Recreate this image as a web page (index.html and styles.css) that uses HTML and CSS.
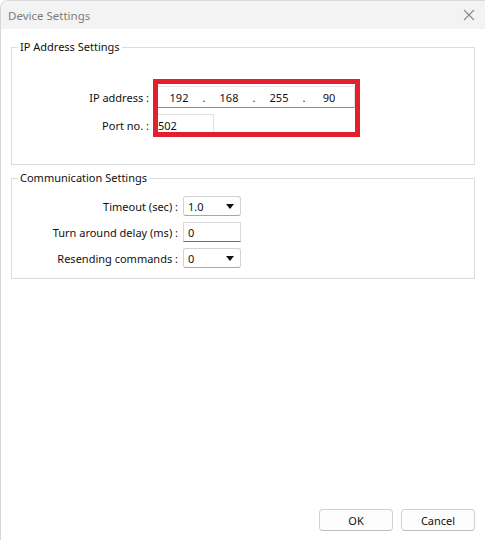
FILE: index.html
```html
<!DOCTYPE html>
<html>
<head>
<meta charset="utf-8">
<title>Device Settings</title>
<link rel="stylesheet" href="styles.css">
</head>
<body>
<div class="window">
  <div class="titlebar">
    <span class="title">Device Settings</span>
    <svg class="close" width="12" height="12" viewBox="0 0 12 12"><path d="M1 1 L11 11 M11 1 L1 11" stroke="#8a8a8a" stroke-width="1.1" fill="none"/></svg>
  </div>
  <div class="content">
    <fieldset class="group group-ip">
      <legend>IP Address Settings</legend>
      <div class="form-grid ip-grid">
        <div class="label">IP address :</div>
        <div class="field ip-field">
          <span class="seg">192</span><span class="dot">.</span>
          <span class="seg">168</span><span class="dot">.</span>
          <span class="seg">255</span><span class="dot">.</span>
          <span class="seg">90</span>
        </div>
        <div class="label">Port no. :</div>
        <div class="field port-field">502</div>
      </div>
      <div class="highlight"></div>
    </fieldset>
    <fieldset class="group group-comm">
      <legend>Communication Settings</legend>
      <div class="form-grid comm-grid">
        <div class="label">Timeout (sec) :</div>
        <div class="select"><span>1.0</span><svg width="8" height="5" viewBox="0 0 8 5"><polygon points="0,0 8,0 4,5" fill="#111"/></svg></div>
        <div class="label">Turn around delay (ms) :</div>
        <div class="field num-field">0</div>
        <div class="label">Resending commands :</div>
        <div class="select"><span>0</span><svg width="8" height="5" viewBox="0 0 8 5"><polygon points="0,0 8,0 4,5" fill="#111"/></svg></div>
      </div>
    </fieldset>
    <div class="buttons">
      <button class="btn">OK</button>
      <button class="btn">Cancel</button>
    </div>
  </div>
</div>
</body>
</html>
```
FILE: styles.css
```css
html, body {
  margin: 0;
  padding: 0;
  background: #ffffff;
}
body {
  font-family: "Noto Sans", "Open Sans", sans-serif;
  font-size: 11px;
  color: #111;
}
.window {
  width: 485px;
  height: 540px;
  display: flex;
  flex-direction: column;
  box-sizing: border-box;
  border-left: 1px solid #d6d6d6;
  border-top: 1px solid #dadada;
  border-top-left-radius: 8px;
  overflow: hidden;
  background: #fff;
}
.titlebar {
  height: 28px;
  flex: none;
  background: #f3f3f3;
  display: flex;
  align-items: center;
  justify-content: space-between;
  padding: 0 10px 0 7px;
}
.title {
  color: #7c7c7c;
  font-size: 11.5px;
}
.close {
  display: block;
}
.content {
  flex: 1;
  display: flex;
  flex-direction: column;
  padding: 0 10px 9px 10px;
}
.group {
  position: relative;
  border: 1px solid #dcdcdc;
  margin: 0;
  padding: 0;
  min-width: 0;
}
.group legend {
  margin-left: 6px;
  padding: 0 2px;
  line-height: 16px;
  color: #111;
}
.group-ip {
  margin-top: 10px;
  padding: 31px 0 28px 0;
}
.group-comm {
  margin-top: 5px;
  padding: 10px 0 10px 0;
}
.form-grid {
  display: grid;
  align-items: center;
  row-gap: 6px;
}
.ip-grid {
  grid-template-columns: 137px auto;
  column-gap: 7px;
  justify-items: start;
}
.comm-grid {
  grid-template-columns: 166px auto;
  column-gap: 5px;
  justify-items: start;
}
.label {
  justify-self: end;
  white-space: nowrap;
}
.field {
  box-sizing: border-box;
  height: 22px;
  background: #fff;
  border: 1px solid #e2e2e2;
  display: flex;
  align-items: center;
}
.ip-field {
  width: 199px;
  border-bottom-color: #8c8c8c;
}
.seg {
  width: 44px;
  text-align: center;
}
.dot {
  width: 6px;
  text-align: center;
}
.port-field {
  width: 58px;
  padding-left: 1px;
}
.num-field {
  width: 58px;
  height: 20px;
  padding-left: 4px;
  border-color: #dadada;
  border-bottom-color: #6e6e6e;
}
.select {
  box-sizing: border-box;
  width: 58px;
  height: 20px;
  border: 1px solid #d2d2d2;
  border-bottom-color: #a8a8a8;
  border-radius: 3px;
  display: flex;
  align-items: center;
  justify-content: space-between;
  padding: 0 6px 0 4px;
}
.select svg {
  display: block;
}
.highlight {
  position: absolute;
  left: 141px;
  top: 24px;
  width: 207px;
  height: 58px;
  box-sizing: border-box;
  border: 5px solid #e31e2d;
}
.buttons {
  margin-top: auto;
  display: flex;
  justify-content: flex-end;
  gap: 8px;
  padding-right: 0;
}
.btn {
  width: 74px;
  height: 22px;
  box-sizing: border-box;
  font-family: "Noto Sans", "Open Sans", sans-serif;
  font-size: 11px;
  color: #111;
  background: #fdfdfd;
  border: 1px solid #d0d0d0;
  border-bottom-color: #bdbdbd;
  border-radius: 4px;
  padding: 0;
}
```
